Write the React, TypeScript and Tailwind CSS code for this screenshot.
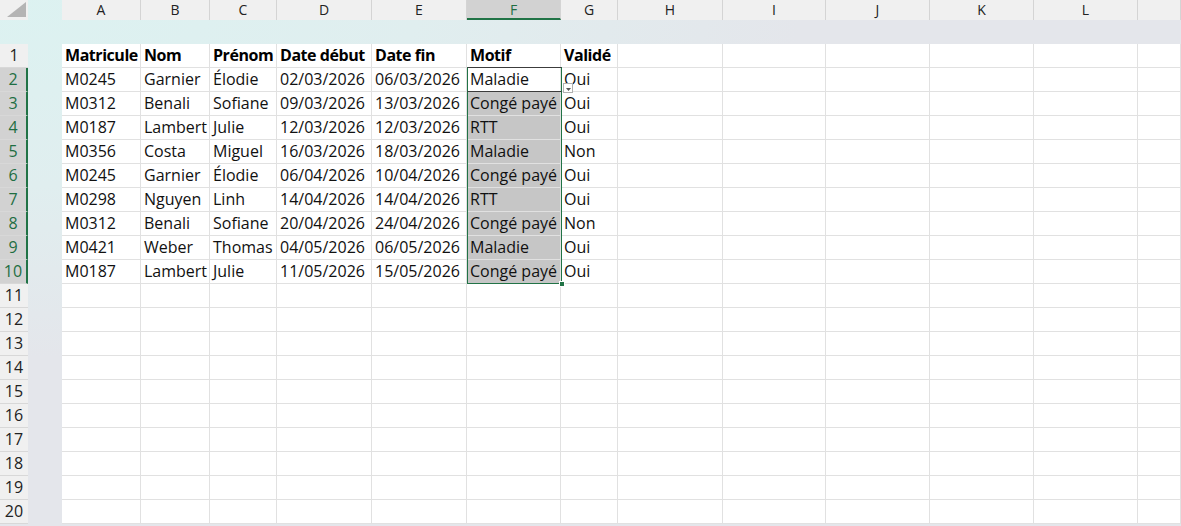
const columns = [
  { label: "A", w: "w-[79px]" },
  { label: "B", w: "w-[69px]" },
  { label: "C", w: "w-[67px]" },
  { label: "D", w: "w-[95px]" },
  { label: "E", w: "w-[95px]" },
  { label: "F", w: "w-[94px]" },
  { label: "G", w: "w-[57px]" },
  { label: "H", w: "w-[105px]" },
  { label: "I", w: "w-[103px]" },
  { label: "J", w: "w-[104px]" },
  { label: "K", w: "w-[104px]" },
  { label: "L", w: "w-[104px]" },
  { label: "", w: "flex-1" },
];

const data = [
  ["Matricule", "Nom", "Prénom", "Date début", "Date fin", "Motif", "Validé"],
  ["M0245", "Garnier", "Élodie", "02/03/2026", "06/03/2026", "Maladie", "Oui"],
  ["M0312", "Benali", "Sofiane", "09/03/2026", "13/03/2026", "Congé payé", "Oui"],
  ["M0187", "Lambert", "Julie", "12/03/2026", "12/03/2026", "RTT", "Oui"],
  ["M0356", "Costa", "Miguel", "16/03/2026", "18/03/2026", "Maladie", "Non"],
  ["M0245", "Garnier", "Élodie", "06/04/2026", "10/04/2026", "Congé payé", "Oui"],
  ["M0298", "Nguyen", "Linh", "14/04/2026", "14/04/2026", "RTT", "Oui"],
  ["M0312", "Benali", "Sofiane", "20/04/2026", "24/04/2026", "Congé payé", "Non"],
  ["M0421", "Weber", "Thomas", "04/05/2026", "06/05/2026", "Maladie", "Oui"],
  ["M0187", "Lambert", "Julie", "11/05/2026", "15/05/2026", "Congé payé", "Oui"],
];

const rowNumbers = Array.from({ length: 20 }, (_, i) => i + 1);

export default function App() {
  return (
    <div className="w-[1181px] h-[526px] overflow-hidden font-['Open_Sans',sans-serif] text-[#111] bg-[radial-gradient(ellipse_at_top_left,#dcf2f1_0%,#e0eeef_25%,#e4e6eb_48%)]">
      {/* column headers */}
      <div className="flex h-[20px]">
        <div className="w-[28px] shrink-0 bg-[#f0f0f0] relative">
          <svg className="absolute left-0 top-0" width="28" height="20" viewBox="0 0 28 20">
            <polygon points="7,17 26,17 26,2" fill="#b4b4b4" />
          </svg>
        </div>
        <div className="w-[34px] shrink-0" />
        {columns.map((c, i) => {
          const sel = c.label === "F";
          return (
            <div
              key={i}
              className={`${c.w} shrink-0 border-r border-[#d4d4d4] text-center text-[14px] leading-[19px] ${
                sel ? "bg-[#d2d2d2] text-[#1e6e42] border-b-2 border-b-[#217346]" : "bg-[#f0f0f0] text-[#222]"
              }`}
            >
              {c.label}
            </div>
          );
        })}
      </div>

      {/* band */}
      <div className="h-[24px]" />

      {/* body */}
      <div className="flex">
        <div className="w-[28px] shrink-0 flex flex-col">
          {rowNumbers.map((n) => {
            const sel = n >= 2 && n <= 10;
            return (
              <div
                key={n}
                className={`h-[24px] text-center text-[16px] leading-[23px] border-b border-[#d8d8d8] ${
                  sel ? "bg-[#d2d2d2] text-[#1e6e42] border-r-2 border-r-[#217346]" : "bg-[#f0f0f0] text-[#222]"
                }`}
              >
                {n}
              </div>
            );
          })}
        </div>
        <div className="w-[34px] shrink-0" />
        <div className="flex-1 relative bg-white">
          {rowNumbers.map((n) => {
            const row = data[n - 1];
            return (
              <div key={n} className="flex h-[24px]">
                {columns.map((c, ci) => {
                  const inSel = ci === 5 && n >= 3 && n <= 10;
                  return (
                    <div
                      key={ci}
                      className={`${c.w} shrink-0 h-[24px] border-r border-b border-[#e1e1e1] pl-[3px] text-[16px] leading-[22px] whitespace-nowrap ${
                        n === 1 ? "font-bold text-black tracking-[-0.45px]" : ""
                      } ${inSel ? "bg-[#c6c6c6]" : ""}`}
                    >
                      {row && row[ci] ? row[ci] : ""}
                    </div>
                  );
                })}
              </div>
            );
          })}

          {/* selection F2:F10 */}
          <div className="absolute left-[405px] top-[23px] w-[95px] h-[217px] border border-[#217346] pointer-events-none" />
          <div className="absolute left-[405px] top-[23px] w-[95px] h-[25px] border border-[#3c3c3c] border-r-[#217346] border-l-[#217346] pointer-events-none" />
          {/* fill handle */}
          <div className="absolute left-[497px] top-[237px] w-[6px] h-[6px] bg-[#217346] border border-white" />
          {/* paste options */}
          <div className="absolute left-[501px] top-[39px] w-[10px] h-[10px] bg-white border border-[#b0b0b0]">
            <svg className="absolute left-[2px] top-[4px]" width="5" height="3" viewBox="0 0 5 3">
              <polygon points="0,0 5,0 2.5,3" fill="#555" />
            </svg>
          </div>
        </div>
      </div>
    </div>
  );
}
